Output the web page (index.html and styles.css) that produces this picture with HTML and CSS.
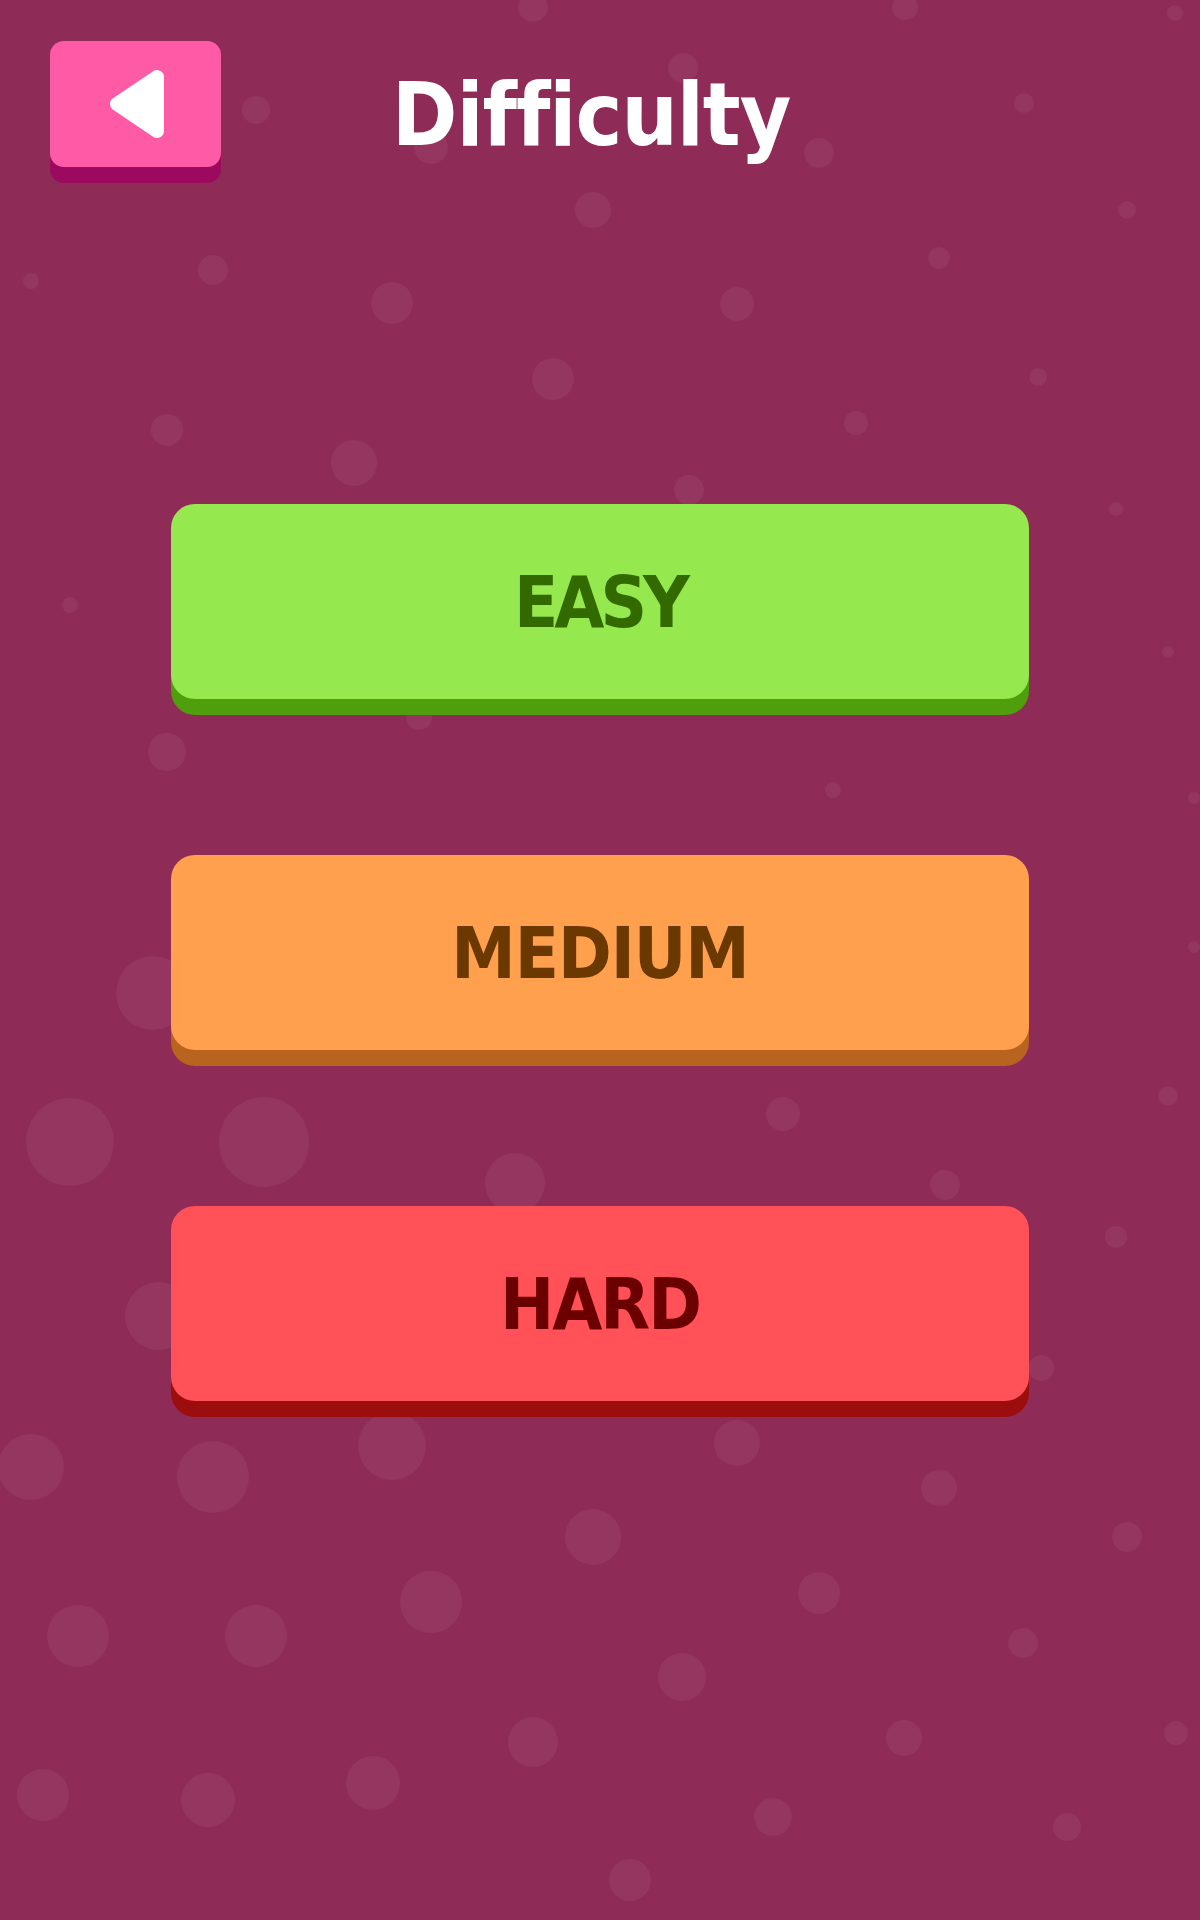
FILE: index.html
```html
<!DOCTYPE html>
<html lang="en">
<head>
    <meta charset="UTF-8">
    <meta name="viewport" content="width=device-width, initial-scale=1.0">
    <title>Difficulty</title>
    <link rel="stylesheet" href="styles.css">
</head>
<body>
    <!-- background bubbles -->
    <svg class="bubbles" width="1200" height="1920" viewBox="0 0 1200 1920">
        <g fill="#ffffff" fill-opacity="0.055">
            <circle cx="533" cy="7" r="15"/>
            <circle cx="905" cy="7" r="13"/>
            <circle cx="1175" cy="13" r="8"/>
            <circle cx="683" cy="68" r="15"/>
            <circle cx="1024" cy="103" r="10"/>
            <circle cx="256" cy="110" r="14"/>
            <circle cx="431" cy="147" r="17"/>
            <circle cx="819" cy="153" r="15"/>
            <circle cx="593" cy="210" r="18"/>
            <circle cx="1127" cy="210" r="9"/>
            <circle cx="939" cy="258" r="11"/>
            <circle cx="213" cy="270" r="15"/>
            <circle cx="31" cy="281" r="8"/>
            <circle cx="392" cy="303" r="21"/>
            <circle cx="737" cy="304" r="17"/>
            <circle cx="1038" cy="377" r="9"/>
            <circle cx="553" cy="379" r="21"/>
            <circle cx="856" cy="423" r="12"/>
            <circle cx="167" cy="430" r="16"/>
            <circle cx="354" cy="463" r="23"/>
            <circle cx="689" cy="490" r="15"/>
            <circle cx="1116" cy="509" r="7"/>
            <circle cx="70" cy="605" r="8"/>
            <circle cx="1168" cy="652" r="6"/>
            <circle cx="419" cy="717" r="13"/>
            <circle cx="167" cy="752" r="19"/>
            <circle cx="833" cy="790" r="8"/>
            <circle cx="1194" cy="798" r="6"/>
            <circle cx="1194" cy="947" r="6"/>
            <circle cx="153" cy="993" r="37"/>
            <circle cx="1168" cy="1096" r="10"/>
            <circle cx="783" cy="1114" r="17"/>
            <circle cx="70" cy="1142" r="44"/>
            <circle cx="264" cy="1142" r="45"/>
            <circle cx="515" cy="1183" r="30"/>
            <circle cx="945" cy="1185" r="15"/>
            <circle cx="1116" cy="1237" r="11"/>
            <circle cx="159" cy="1316" r="34"/>
            <circle cx="1041" cy="1368" r="13"/>
            <circle cx="737" cy="1443" r="23"/>
            <circle cx="392" cy="1446" r="34"/>
            <circle cx="31" cy="1467" r="33"/>
            <circle cx="213" cy="1477" r="36"/>
            <circle cx="939" cy="1488" r="18"/>
            <circle cx="593" cy="1537" r="28"/>
            <circle cx="1127" cy="1537" r="15"/>
            <circle cx="819" cy="1593" r="21"/>
            <circle cx="431" cy="1602" r="31"/>
            <circle cx="78" cy="1636" r="31"/>
            <circle cx="256" cy="1636" r="31"/>
            <circle cx="1023" cy="1643" r="15"/>
            <circle cx="682" cy="1677" r="24"/>
            <circle cx="1176" cy="1733" r="12"/>
            <circle cx="904" cy="1738" r="18"/>
            <circle cx="533" cy="1742" r="25"/>
            <circle cx="373" cy="1783" r="27"/>
            <circle cx="43" cy="1795" r="26"/>
            <circle cx="208" cy="1800" r="27"/>
            <circle cx="773" cy="1817" r="19"/>
            <circle cx="1067" cy="1827" r="14"/>
            <circle cx="630" cy="1880" r="21"/>
        </g>
    </svg>

    <div class="screen">
        <header class="top-bar">
            <button class="back-btn" type="button" aria-label="Back">
                <svg width="56" height="72" viewBox="0 0 56 72">
                    <path d="M9 36 L49 9 L49 63 Z" fill="#ffffff" stroke="#ffffff" stroke-width="14" stroke-linejoin="round"/>
                </svg>
            </button>
            <h1 class="title">Difficulty</h1>
            <div></div>
        </header>

        <main class="levels">
            <button class="level easy" type="button">EASY</button>
            <button class="level medium" type="button">MEDIUM</button>
            <button class="level hard" type="button">HARD</button>
        </main>
    </div>
</body>
</html>
```

FILE: styles.css
```css
body {
    font-family: "DejaVu Sans Condensed", "DejaVu Sans", sans-serif;
    margin: 0;
    padding: 0;
    width: 1200px;
    height: 1920px;
    overflow: hidden;
    position: relative;
    background-color: #8e2b57;
    color: #ffffff;
}

.bubbles {
    position: absolute;
    top: 0;
    left: 0;
    z-index: 0;
}

.screen {
    position: relative;
    z-index: 1;
}

.top-bar {
    display: grid;
    grid-template-columns: 1fr auto 1fr;
    align-items: start;
    padding: 41px 50px 0 50px;
}

.back-btn {
    width: 171px;
    height: 126px;
    border: none;
    border-radius: 14px;
    background-color: #ff5aa5;
    box-shadow: 0 16px 0 #9c0a5f;
    display: flex;
    justify-content: center;
    align-items: center;
    padding: 0;
    cursor: pointer;
}

.title {
    margin: 30px 18px 0 0;
    font-size: 88px;
    font-weight: bold;
    font-stretch: condensed;
    line-height: 1;
    letter-spacing: -1px;
    color: #ffffff;
}

.levels {
    display: flex;
    flex-direction: column;
    align-items: center;
    gap: 156px;
    margin-top: 337px;
}

.level {
    width: 858px;
    height: 195px;
    border: none;
    border-radius: 24px;
    font-family: "DejaVu Sans Condensed", "DejaVu Sans", sans-serif;
    font-size: 72px;
    font-weight: bold;
    font-stretch: condensed;
    letter-spacing: -1px;
    cursor: pointer;
}

.easy {
    background-color: #95e84e;
    box-shadow: 0 16px 0 #4f9e0b;
    color: #336a00;
    letter-spacing: -4px;
}

.medium {
    background-color: #ffa04f;
    box-shadow: 0 16px 0 #b8641f;
    color: #6b3800;
}

.hard {
    background-color: #ff5157;
    box-shadow: 0 16px 0 #9c0d0d;
    color: #6b0000;
    letter-spacing: -2px;
}
```
